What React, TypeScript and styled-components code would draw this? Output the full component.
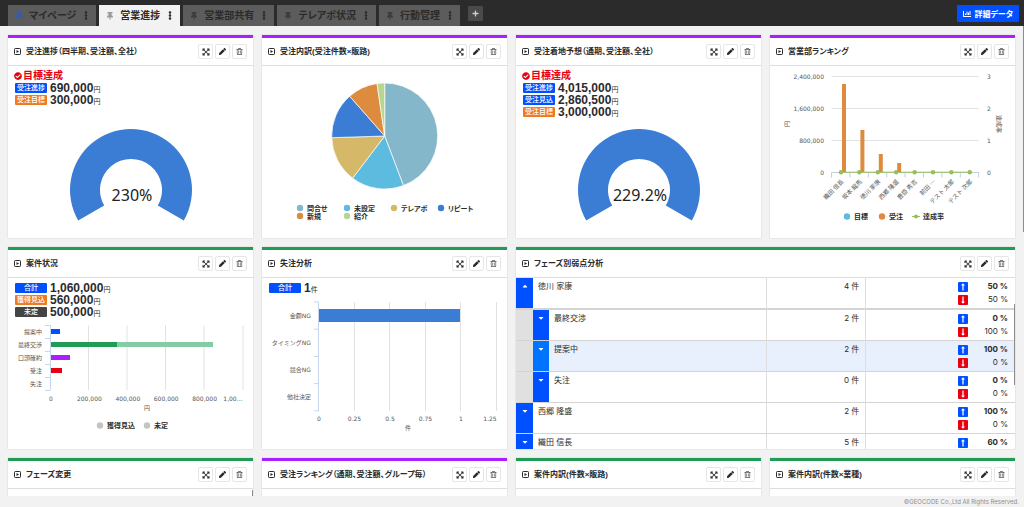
import React from 'react';
import styled, { createGlobalStyle } from 'styled-components';
import {
  FaThumbtack, FaEllipsisV, FaPlus, FaChartBar, FaExpandArrowsAlt, FaPen, FaRegTrashAlt,
  FaCheckCircle, FaCaretDown, FaCaretUp, FaLongArrowAltUp, FaLongArrowAltDown,
} from 'react-icons/fa';

const BLUE = '#0050ff';
const ORANGE = '#ee7a22';
const PURPLE = '#ab1eff';
const GREEN = '#1f9d55';
const CHART_BLUE = '#3b7dd4';

const GlobalStyle = createGlobalStyle`
  * { box-sizing: border-box; }
  body {
    margin: 0;
    background: #f2f2f2;
    color: #2b2b2b;
    font-family: "Liberation Sans", "Noto Sans CJK JP", sans-serif;
    font-size: 8px;
  }
  button { font-family: inherit; padding: 0; margin: 0; border: 0; cursor: pointer; color: inherit; }
`;

const Page = styled.div`
  display: flex;
  flex-direction: column;
  height: 100vh;
  overflow: hidden;
`;

const TopBar = styled.header`
  display: flex;
  align-items: flex-start;
  flex: none;
  height: 26px;
  padding: 5px 5px 0 8px;
  background: #2b2b2b;
`;

const TabList = styled.nav`
  display: flex;
  flex: 1;
  gap: 3px;
`;

const Tab = styled.div<{ $active?: boolean }>`
  display: flex;
  align-items: center;
  height: 21px;
  padding: 0 8px;
  gap: 8px;
  background: ${(p) => (p.$active ? '#f2f2f2' : '#5c5c5c')};
  color: #2b2b2b;
`;

const TabButton = styled.button<{ $pin: string }>`
  display: flex;
  align-items: center;
  gap: 7px;
  background: none;
  font-size: 10px;
  line-height: 20px;
  font-weight: 700;
  font-feature-settings: "palt";
  white-space: nowrap;
  svg { width: 6px; height: 8px; color: ${(p) => p.$pin}; }
`;

const TabMenu = styled.button`
  display: flex;
  width: 4px;
  background: none;
  svg { width: 4px; height: 9px; }
`;

const AddTab = styled.button`
  display: flex;
  align-items: center;
  justify-content: center;
  width: 15px;
  height: 15px;
  margin: 1px 0 0 5px;
  border-radius: 1px;
  background: #4a4a4a;
  color: #cfcfcf;
  svg { width: 7px; height: 7px; }
`;

const DetailButton = styled.button`
  display: flex;
  align-items: center;
  gap: 3px;
  height: 17px;
  padding: 0 6px;
  border-radius: 1px;
  background: ${BLUE};
  color: #fff;
  font-size: 8px;
  font-weight: 700;
  font-feature-settings: "palt";
  white-space: nowrap;
  svg { width: 8px; height: 8px; }
`;

const Board = styled.main`
  position: relative;
  flex: 1;
  min-height: 0;
  overflow: hidden;
  padding: 9px 9px 0 8px;
`;

const CardGrid = styled.div`
  display: grid;
  grid-template-columns: repeat(4, minmax(0, 1fr));
  grid-template-rows: 203px 202px 202px;
  gap: 9px;
`;

const CardBox = styled.section<{ $accent: string; $wide?: boolean }>`
  position: relative;
  display: flex;
  flex-direction: column;
  grid-column: span ${(p) => (p.$wide ? 2 : 1)};
  min-width: 0;
  overflow: hidden;
  border-top: 3px solid ${(p) => p.$accent};
  background: #fff;
  box-shadow: 0 0 1px rgba(0, 0, 0, 0.25);
`;

const CardHeader = styled.header`
  display: flex;
  align-items: center;
  flex: none;
  gap: 5px;
  height: 28px;
  padding: 0 6px;
  border-bottom: 1px solid #dedede;
`;

const CardTitle = styled.h2`
  flex: 1;
  margin: 0;
  font-size: 8px;
  line-height: 12px;
  font-weight: 700;
  font-feature-settings: "palt";
  white-space: nowrap;
`;

const CardTools = styled.div`
  display: flex;
  gap: 2px;
`;

const ToolButton = styled.button`
  display: flex;
  align-items: center;
  justify-content: center;
  width: 15px;
  height: 15px;
  border: 1px solid #e6e6e6;
  border-radius: 2px;
  background: #fff;
  svg { width: 7px; height: 7px; }
  &:first-child svg { width: 8px; height: 8px; }
  &:last-child { color: #555; }
`;

const CardBody = styled.div`
  display: flex;
  flex-direction: column;
  flex: 1;
  min-height: 0;
`;

const Stats = styled.div`
  padding: 4px 6px 0;
`;

const Achieved = styled.p`
  display: flex;
  align-items: center;
  gap: 1px;
  height: 12px;
  margin: 0;
  color: #e60012;
  font-size: 10px;
  line-height: 12px;
  font-weight: 700;
  svg { width: 8px; height: 8px; }
`;

const StatRow = styled.div`
  display: flex;
  align-items: center;
  gap: 3px;
  height: 12px;
  padding-left: 1px;
`;

const StatLabel = styled.span<{ $color: string }>`
  width: 32px;
  height: 10px;
  border-radius: 1px;
  background: ${(p) => p.$color};
  color: #fff;
  font-size: 7px;
  line-height: 10px;
  font-weight: 500;
  text-align: center;
`;

const StatValue = styled.span`
  display: flex;
  align-items: baseline;
  font-size: 12px;
  line-height: 12px;
  font-weight: 700;
  small { font-size: 7px; line-height: 8px; font-weight: 400; }
`;

const Chart = styled.svg<{ $h: number }>`
  display: block;
  flex: none;
  width: 100%;
  height: ${(p) => p.$h}px;
  margin-top: auto;
  font-family: "DejaVu Sans", "Noto Sans CJK JP", sans-serif;
  font-size: 6px;
  fill: #555;
`;

const LegendText = styled.text`
  font-size: 7px;
  font-weight: 700;
  font-feature-settings: "palt";
  fill: #2b2b2b;
`;

const NameText = styled.text`
  font-family: "Noto Sans CJK JP", sans-serif;
`;

const GaugeText = styled.text`
  font-family: "Noto Sans", sans-serif;
  font-size: 16px;
  fill: #222;
`;

const PhaseTable = styled.table`
  width: 100%;
  table-layout: fixed;
  border-collapse: separate;
  border-spacing: 0;
  font-family: Inter, "Noto Sans CJK JP", sans-serif;
  font-size: 8px;
  line-height: 13px;
`;

const PhaseRow = styled.tr<{ $open?: boolean; $hover?: boolean }>`
  height: ${(p) => (p.$open ? 32 : 31)}px;
  background: ${(p) => (p.$hover ? '#e8effd' : '#fff')};
  td { border-bottom: ${(p) => (p.$open ? 2 : 1)}px solid #d4d4d4; }
`;

const Cell = styled.td<{ $right?: boolean }>`
  padding: 2px 6px 0 5px;
  vertical-align: top;
  text-align: ${(p) => (p.$right ? 'right' : 'left')};
  & + & { border-left: 1px solid #dedede; }
`;

const ToggleCell = styled.td<{ $kind: 'toggle' | 'hover' | 'spacer' }>`
  height: 1px;
  padding: 0;
  vertical-align: top;
  background: ${(p) => ({ toggle: BLUE, hover: '#0073ff', spacer: '#e0e0e0' }[p.$kind])};
`;

const Toggle = styled.button`
  display: flex;
  justify-content: center;
  width: 100%;
  padding-top: 4px;
  background: none;
  color: #fff;
  svg { width: 8px; height: 8px; }
`;

const Rate = styled.div<{ $strong?: boolean }>`
  display: flex;
  align-items: center;
  justify-content: flex-end;
  height: 13px;
  padding-right: 1px;
  font-weight: ${(p) => (p.$strong ? 700 : 400)};
  span { width: 40px; }
`;

const Arrow = styled.i<{ $color: string }>`
  display: flex;
  align-items: center;
  justify-content: center;
  width: 10px;
  height: 10px;
  border-radius: 1px;
  background: ${(p) => p.$color};
  color: #fff;
  svg { width: 6px; height: 8px; }
`;

const ScrollThumb = styled.span<{ $top: number; $len: number }>`
  position: absolute;
  right: 0;
  top: ${(p) => p.$top}px;
  width: 1px;
  height: ${(p) => p.$len}px;
  background: #8c8c8c;
`;

const Footer = styled.footer`
  flex: none;
  height: 11px;
  padding-right: 5px;
  color: #8c8c8c;
  font-family: Inter, sans-serif;
  font-size: 6px;
  line-height: 11px;
  text-align: right;
`;

const TitleIcon = () => (
  <svg width="7" height="7" viewBox="0 0 14 14" aria-hidden="true">
    <rect x="1" y="1" width="12" height="12" rx="1.5" fill="none" stroke="#2b2b2b" strokeWidth="2" />
    <path d="M5 3.8 L10.2 7 L5 10.2 Z" fill="#2b2b2b" />
  </svg>
);

type CardProps = { title: string; accent: string; wide?: boolean; children?: React.ReactNode };

const Card = ({ title, accent, wide, children }: CardProps) => (
  <CardBox $accent={accent} $wide={wide}>
    <CardHeader>
      <TitleIcon />
      <CardTitle>{title}</CardTitle>
      <CardTools>
        <ToolButton aria-label="拡大"><FaExpandArrowsAlt /></ToolButton>
        <ToolButton aria-label="編集"><FaPen /></ToolButton>
        <ToolButton aria-label="削除"><FaRegTrashAlt /></ToolButton>
      </CardTools>
    </CardHeader>
    <CardBody>{children}</CardBody>
  </CardBox>
);

const Stat = ({ label, color, value, unit }: { label: string; color: string; value: string; unit: string }) => (
  <StatRow>
    <StatLabel $color={color}>{label}</StatLabel>
    <StatValue>{value}<small>{unit}</small></StatValue>
  </StatRow>
);

const Gauge = ({ value }: { value: string }) => (
  <Chart $h={115} viewBox="0 0 245 115" role="img" aria-label={value}>
    <path
      fill={CHART_BLUE}
      d="M70.2 97.5 A61 61 0 1 1 175.8 97.5 L149.8 82.5 A31 31 0 1 0 96.2 82.5 Z"
    />
    <GaugeText x="124" y="78" textAnchor="middle">{value}</GaugeText>
  </Chart>
);

const slices = [
  { from: 0, to: 159.3, color: '#85b7ca' },
  { from: 159.3, to: 217.3, color: '#5ebbe0' },
  { from: 217.3, to: 268.2, color: '#d6b869' },
  { from: 268.2, to: 318.6, color: CHART_BLUE },
  { from: 318.6, to: 351.7, color: '#dd8c3f' },
  { from: 351.7, to: 360, color: '#b7d68e' },
];

const pieLegend = [
  ['問合せ', '#85b7ca'], ['未設定', '#5ebbe0'], ['テレアポ', '#d6b869'],
  ['リピート', CHART_BLUE], ['新規', '#dd8c3f'], ['紹介', '#b7d68e'],
];

const rim = (deg: number) => {
  const a = (deg * Math.PI) / 180;
  return `${122.7 + 53 * Math.sin(a)} ${70 - 53 * Math.cos(a)}`;
};

const PieChart = () => (
  <Chart $h={172} viewBox="0 0 245 172">
    {slices.map((s) => (
      <path
        key={s.from}
        d={`M122.7 70 L${rim(s.from)} A53 53 0 0 1 ${rim(s.to)} Z`}
        fill={s.color}
        stroke="#fff"
        strokeWidth="0.7"
      />
    ))}
    {pieLegend.map(([name, color], i) => {
      const x = 38 + (i % 4) * 47;
      const y = 142 + Math.floor(i / 4) * 8;
      return (
        <g key={name}>
          <circle cx={x} cy={y} r="3.2" fill={color} />
          <LegendText x={x + 7} y={y + 3}>{name}</LegendText>
        </g>
      );
    })}
  </Chart>
);

const people = ['織田 信長', '坂本 龍馬', '徳川 家康', '西郷 隆盛', '豊臣 秀吉', '前田 …', 'テスト 太郎', 'テスト 次郎'];
const orders = [88, 42, 18, 9];

const RankingChart = () => (
  <Chart $h={172} viewBox="0 0 245 172">
    {['2,400,000', '1,600,000', '800,000', '0'].map((label, i) => (
      <g key={label}>
        <path d={`M61.5 ${10.5 + i * 32} H209`} stroke={i === 3 ? '#c0d0e0' : '#e2e2e2'} fill="none" />
        <text x="54" y={13 + i * 32} textAnchor="end">{label}</text>
        <text x="217" y={13 + i * 32}>{3 - i}</text>
      </g>
    ))}
    <text transform="translate(19 58) rotate(-90)" textAnchor="middle">円</text>
    <text transform="translate(227 58) rotate(90)" textAnchor="middle">達成率</text>
    {orders.map((h, i) => (
      <rect key={h} x={72 + i * 18.4} y={106 - h} width="4" height={h} fill="#dd8c3f" />
    ))}
    {Array.from({ length: 9 }, (_, i) => (
      <path key={i} d={`M${61.5 + i * 18.4} 106.5 v5`} stroke="#c0d0e0" />
    ))}
    <path d="M71 106.2 H200" stroke="#96bf58" strokeWidth="1" />
    {people.map((name, i) => (
      <g key={name}>
        <circle cx={71 + i * 18.4} cy="106.2" r="2.2" fill="#96bf58" />
        <NameText transform={`translate(${74 + i * 18.4} 116) rotate(-45)`} textAnchor="end">{name}</NameText>
      </g>
    ))}
    <circle cx="77" cy="150.5" r="3.2" fill="#5ebbe0" />
    <LegendText x="84" y="153">目標</LegendText>
    <circle cx="112" cy="150.5" r="3.2" fill="#dd8c3f" />
    <LegendText x="119" y="153">受注</LegendText>
    <path d="M142 150.5 h8" stroke="#96bf58" strokeWidth="1" />
    <circle cx="146" cy="150.5" r="2" fill="#96bf58" />
    <LegendText x="153" y="153">達成率</LegendText>
  </Chart>
);

const phases = ['提案中', '最終交渉', '口頭確約', '受注', '失注'];

const StatusChart = () => (
  <Chart $h={130} viewBox="0 3 245 130">
    {[80.5, 119, 157.5, 196, 235].map((x) => (
      <path key={x} d={`M${x} 9.5 V74`} stroke="#e2e2e2" />
    ))}
    <path d="M42.5 9.5 V74" stroke="#c6d6ee" />
    {[0, 1, 2, 3, 4, 5].map((i) => (
      <path key={i} d={`M37 ${9.5 + i * 13} h5.5`} stroke="#c6d6ee" />
    ))}
    {phases.map((name, i) => (
      <text key={name} x="34" y={18 + i * 13} textAnchor="end">{name}</text>
    ))}
    <rect x="43" y="13" width="9" height="5" fill={BLUE} />
    <rect x="43" y="26" width="66" height="5" fill={GREEN} />
    <rect x="109" y="26" width="96" height="5" fill="#84cca6" />
    <rect x="43" y="39" width="19" height="5" fill={PURPLE} />
    <rect x="43" y="52" width="11" height="5" fill="#e60012" />
    {['0', '200,000', '400,000', '600,000', '800,000'].map((label, i) => (
      <text key={label} x={43 + i * 38.4} y="85" textAnchor="middle">{label}</text>
    ))}
    <text x="225" y="85" textAnchor="middle">1,00…</text>
    <text x="139" y="94" textAnchor="middle">円</text>
    <circle cx="92" cy="109.5" r="3.2" fill="#c4c4c4" />
    <LegendText x="99" y="112">獲得見込</LegendText>
    <circle cx="139" cy="109.5" r="3.2" fill="#c4c4c4" />
    <LegendText x="146" y="112">未定</LegendText>
  </Chart>
);

const LostChart = () => (
  <Chart $h={153} viewBox="0 0 245 153">
    {[92.5, 127.5, 163.5, 198.5, 234.5].map((x) => (
      <path key={x} d={`M${x} 6 V115`} stroke="#e2e2e2" />
    ))}
    <path d="M56.5 6 V115" stroke="#c6d6ee" />
    {[0, 1, 2, 3, 4].map((i) => (
      <path key={i} d={`M52 ${6 + i * 27.2} h5`} stroke="#c6d6ee" />
    ))}
    {['金額NG', 'タイミングNG', '競合NG', '他社決定'].map((name, i) => (
      <text key={name} x="49" y={22 + i * 27} textAnchor="end">{name}</text>
    ))}
    <rect x="57" y="13" width="141" height="13" fill={CHART_BLUE} />
    {['0', '0.25', '0.5', '0.75', '1'].map((label, i) => (
      <text key={label} x={57 + i * 35.5} y="125" textAnchor="middle">{label}</text>
    ))}
    <text x="228" y="125" textAnchor="middle">1.25</text>
    <text x="146" y="134" textAnchor="middle">件</text>
  </Chart>
);

type Phase = { name: string; count: number; up: number; down?: number; open?: boolean; nested?: boolean; hover?: boolean };

const phaseRows: Phase[] = [
  { name: '徳川 家康', count: 4, up: 50, down: 50, open: true },
  { name: '最終交渉', count: 2, up: 0, down: 100, nested: true },
  { name: '提案中', count: 2, up: 100, down: 0, nested: true, hover: true },
  { name: '失注', count: 0, up: 0, down: 0, nested: true },
  { name: '西郷 隆盛', count: 2, up: 100, down: 0 },
  { name: '織田 信長', count: 5, up: 60 },
];

const PhaseAnalysis = () => (
  <PhaseTable>
    <colgroup>
      <col style={{ width: 17 }} />
      <col style={{ width: 16 }} />
      <col />
      <col style={{ width: '20%' }} />
      <col style={{ width: '30%' }} />
    </colgroup>
    <tbody>
      {phaseRows.map((r) => (
        <PhaseRow key={r.name} $open={r.open} $hover={r.hover}>
          {r.nested && <ToggleCell $kind="spacer" />}
          <ToggleCell $kind={r.hover ? 'hover' : 'toggle'}>
            <Toggle aria-label={r.name}>{r.open ? <FaCaretUp /> : <FaCaretDown />}</Toggle>
          </ToggleCell>
          <Cell colSpan={r.nested ? 1 : 2}>{r.name}</Cell>
          <Cell $right>{r.count} 件</Cell>
          <Cell $right>
            <Rate $strong><Arrow $color={BLUE}><FaLongArrowAltUp /></Arrow><span>{r.up} %</span></Rate>
            {r.down !== undefined && (
              <Rate><Arrow $color="#e60012"><FaLongArrowAltDown /></Arrow><span>{r.down} %</span></Rate>
            )}
          </Cell>
        </PhaseRow>
      ))}
    </tbody>
  </PhaseTable>
);

const tabs = [
  { name: 'マイページ', pin: '#2f5cb8' },
  { name: '営業進捗', pin: '#9a9a9a', active: true },
  { name: '営業部共有', pin: '#3c3c3c' },
  { name: 'テレアポ状況', pin: '#3c3c3c' },
  { name: '行動管理', pin: '#3c3c3c' },
];

export default function App() {
  return (
    <Page>
      <GlobalStyle />
      <TopBar>
        <TabList>
          {tabs.map((t) => (
            <Tab key={t.name} $active={t.active}>
              <TabButton $pin={t.pin}><FaThumbtack />{t.name}</TabButton>
              <TabMenu aria-label="メニュー"><FaEllipsisV /></TabMenu>
            </Tab>
          ))}
          <AddTab aria-label="追加"><FaPlus /></AddTab>
        </TabList>
        <DetailButton><FaChartBar />詳細データ</DetailButton>
      </TopBar>
      <Board>
        <CardGrid>
          <Card title="受注進捗（四半期、受注額、全社）" accent={PURPLE}>
            <Stats>
              <Achieved><FaCheckCircle />目標達成</Achieved>
              <Stat label="受注進捗" color={BLUE} value="690,000" unit="円" />
              <Stat label="受注目標" color={ORANGE} value="300,000" unit="円" />
            </Stats>
            <Gauge value="230%" />
          </Card>
          <Card title="受注内訳(受注件数×販路)" accent={PURPLE}><PieChart /></Card>
          <Card title="受注着地予想（通期、受注額、全社）" accent={PURPLE}>
            <Stats>
              <Achieved><FaCheckCircle />目標達成</Achieved>
              <Stat label="受注進捗" color={BLUE} value="4,015,000" unit="円" />
              <Stat label="受注見込" color={BLUE} value="2,860,500" unit="円" />
              <Stat label="受注目標" color={ORANGE} value="3,000,000" unit="円" />
            </Stats>
            <Gauge value="229.2%" />
          </Card>
          <Card title="営業部ランキング" accent={PURPLE}><RankingChart /></Card>

          <Card title="案件状況" accent={GREEN}>
            <Stats>
              <Stat label="合計" color={BLUE} value="1,060,000" unit="円" />
              <Stat label="獲得見込" color={ORANGE} value="560,000" unit="円" />
              <Stat label="未定" color="#444" value="500,000" unit="円" />
            </Stats>
            <StatusChart />
          </Card>
          <Card title="失注分析" accent={GREEN}>
            <Stats><Stat label="合計" color={BLUE} value="1" unit="件" /></Stats>
            <LostChart />
          </Card>
          <Card title="フェーズ別弱点分析" accent={GREEN} wide>
            <PhaseAnalysis />
            <ScrollThumb $top={54} $len={81} />
          </Card>

          <Card title="フェーズ変更" accent={GREEN}><ScrollThumb $top={29} $len={80} /></Card>
          <Card title="受注ランキング（通期、受注額、グループ毎）" accent={PURPLE} />
          <Card title="案件内訳(件数×販路)" accent={GREEN} />
          <Card title="案件内訳(件数×業種)" accent={GREEN} />
        </CardGrid>
        <ScrollThumb $top={0} $len={206} />
      </Board>
      <Footer>©GEOCODE Co.,Ltd All Rights Reserved.</Footer>
    </Page>
  );
}
